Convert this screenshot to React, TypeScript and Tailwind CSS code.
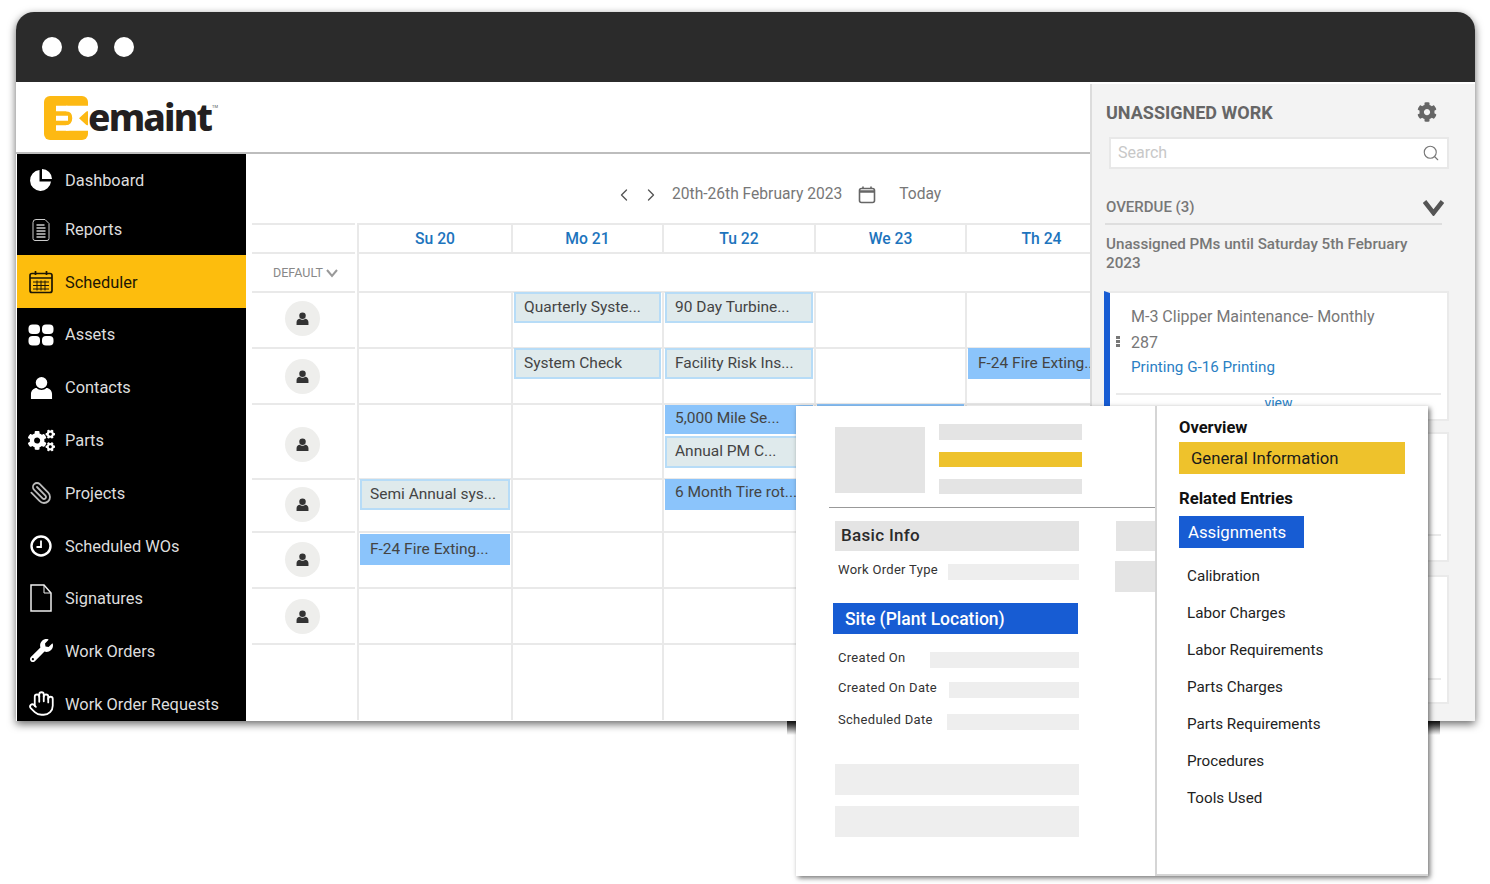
import { FaCog, FaCogs, FaWrench } from "react-icons/fa";
import { ChevronLeft, ChevronRight, Hand, Paperclip, Search } from "lucide-react";

const PieIcon = () => (
  <svg width="24" height="24" viewBox="0 0 24 24" fill="#fff">
    <path d="M10.5 2A10.5 10.5 0 1 0 22 13.5H10.5Z" />
    <path d="M13 1a10 10 0 0 1 10 10H13Z" />
  </svg>
);

const DocLinesIcon = () => (
  <svg width="24" height="24" viewBox="0 0 24 24" fill="none" stroke="#ccc" strokeWidth="1">
    <path d="M7 1.500h9l4 4v15a2 2 0 0 1-2 2H6a2 2 0 0 1-2-2v-16a3 3 0 0 1 3-3Z" />
    <path d="M7.500 7h8M7.500 10h9M7.500 13h9M7.500 16h9M7.500 19h9" strokeWidth="1.500" />
  </svg>
);

const SchedulerIcon = () => (
  <svg width="24" height="24" viewBox="0 0 24 24" fill="none" stroke="#1c1605" strokeWidth="1.700">
    <rect x="1" y="3.500" width="22" height="19" rx="2" />
    <path d="M1 8h22M6.500 1v4M17.500 1v4" />
    <path d="M4 12h16M4 15.500h16M4 19h16M8 10.500v10M12 10.500v10M16 10.500v10" strokeWidth="1" />
  </svg>
);

const AssetsIcon = () => (
  <svg width="26" height="22" viewBox="0 0 26 22" fill="#fff">
    <rect x="0.500" y="0.500" width="11.500" height="9.500" rx="4" />
    <rect x="14" y="0.500" width="11.500" height="9.500" rx="4" />
    <rect x="0.500" y="12" width="11.500" height="9.500" rx="4" />
    <rect x="14" y="12" width="11.500" height="9.500" rx="4" />
  </svg>
);

const PersonIcon = ({ size, color }: { size: number; color: string }) => (
  <svg width={size} height={size} viewBox="0 0 24 24" fill={color}>
    <circle cx="12" cy="7" r="6" />
    <path d="M1 24v-5c0-4 3-6.500 6-6.500 1.500 1.500 3 2 5 2s3.500-.5 5-2c3 0 6 2.500 6 6.500v5Z" />
  </svg>
);

const ClockIcon = () => (
  <svg width="24" height="24" viewBox="0 0 24 24" fill="none" stroke="#fff" strokeWidth="2.400">
    <circle cx="12" cy="12" r="9.500" />
    <path d="M12 6.500V13H7.500" strokeWidth="1.800" />
  </svg>
);

const FileIcon = () => (
  <svg width="24" height="28" viewBox="0 0 24 28" fill="none" stroke="#eee" strokeWidth="1.500">
    <path d="M2 1h13l7 8v18H2Z" />
    <path d="M15 1v8h7" strokeWidth="1" />
  </svg>
);

const CalendarIcon = () => (
  <svg width="18" height="18" viewBox="0 0 18 18" fill="none" stroke="#666" strokeWidth="1.600">
    <rect x="1.500" y="2.500" width="15" height="14" rx="2" />
    <path d="M1.500 5.500h15" strokeWidth="2.400" />
    <path d="M5 .5v2M13 .5v2" />
  </svg>
);

const LogoMark = () => (
  <svg width="44" height="44" viewBox="0 0 44 44">
    <rect width="44" height="44" rx="6" fill="#fdb913" />
    <path d="M29 14H44L35 22.200L44 30.500H29Z" fill="#fff" />
    <g fill="none" stroke="#fff" strokeWidth="5.500">
      <path d="M12 12.500H44M12 32H44" />
      <path d="M22 12.500C28 12.500 31 17 31 22.200C31 27 28 32 22 32" />
      <path d="M12 22.200H24" strokeWidth="5" />
    </g>
  </svg>
);

const nav = [
  { label: "Dashboard", icon: <PieIcon />, h: "h-[51px]", pad: "pt-[4px]" },
  { label: "Reports", icon: <DocLinesIcon />, h: "h-[50px]", pad: "pt-0" },
  { label: "Scheduler", icon: <SchedulerIcon />, h: "h-[53px]", pad: "pt-[4px]", active: true },
  { label: "Assets", icon: <AssetsIcon />, h: "h-[53px]", pad: "pt-[2px]" },
  { label: "Contacts", icon: <PersonIcon size={23} color="#fff" />, h: "h-[53px]", pad: "pt-[2px]" },
  { label: "Parts", icon: <FaCogs size={27} color="#fff" />, h: "h-[52px]", pad: "pt-[2px]" },
  { label: "Projects", icon: <Paperclip size={24} color="#bbb" strokeWidth={1.8} className="-scale-x-100" />, h: "h-[53px]", pad: "pt-[4px]" },
  { label: "Scheduled WOs", icon: <ClockIcon />, h: "h-[53px]", pad: "pt-[4px]" },
  { label: "Signatures", icon: <FileIcon />, h: "h-[52px]", pad: "pt-[2px]" },
  { label: "Work Orders", icon: <FaWrench size={23} color="#fff" />, h: "h-[53px]", pad: "pt-[4px]" },
  { label: "Work Order Requests", icon: <Hand size={27} color="#fff" strokeWidth={1.6} />, h: "h-[53px]", pad: "pt-[4px]" },
];

const Sidebar = () => (
  <aside className="ml-px w-[229px] shrink-0 overflow-hidden bg-black">
    {nav.map((item) => (
      <div
        key={item.label}
        className={`flex items-center ${item.h} ${item.active ? "bg-[#fdbd0d] text-[#1c1605]" : "text-[#dddddd]"}`}
      >
        <span className="flex w-[48px] shrink-0 justify-center">{item.icon}</span>
        <span className={`text-[16.400px] leading-none ${item.pad}`}>{item.label}</span>
      </div>
    ))}
  </aside>
);

type Ev = { text: string; live?: boolean; box?: string };

const Event = ({ text, live, box = "-mt-[1px] h-[31px] leading-[26px]" }: Ev) => (
  <div
    className={`truncate border-2 pl-[8px] text-[15.500px] text-[#444] ${box} ${
      live ? "border-[#8bc4fb] bg-[#8bc4fb]" : "border-[#b7dcf7] bg-[#dfeaec]"
    }`}
  >
    {text}
  </div>
);

const colWidths = ["w-[154px]", "w-[151px]", "w-[152px]", "w-[151px]", "w-[151px]"];

const Row = ({
  h,
  cells,
  avatar = true,
  avatarBox = "",
}: {
  h: string;
  cells: Ev[][];
  avatar?: boolean;
  avatarBox?: string;
}) => (
  <div className={`flex ${h}`}>
    <div className="w-[111px] shrink-0 pl-[6px]">
      <div className={`flex h-full w-[103px] items-center justify-center border-t-2 border-[#e9e9e9] ${avatarBox}`}>
        {avatar && (
          <div className="mr-[3px] flex h-[35px] w-[35px] items-center justify-center rounded-full bg-[#eeeeec]">
            <PersonIcon size={13} color="#333" />
          </div>
        )}
      </div>
    </div>
    {cells.map((evs, i) => (
      <div key={i} className={`${colWidths[i]} shrink-0 border-l-2 border-t-2 border-[#e9e9e9] px-px`}>
        {evs.map((e) => (
          <Event key={e.text} {...e} />
        ))}
      </div>
    ))}
  </div>
);

const Calendar = () => (
  <div className="flex w-[845px] shrink-0 flex-col overflow-hidden bg-white">
    <div className="flex h-[69px] items-center pl-[368px] pt-[13px] text-[15.600px] text-[#777]">
      <ChevronLeft size={20} color="#555" strokeWidth={1.6} />
      <ChevronRight size={20} color="#555" strokeWidth={1.6} className="ml-[7px]" />
      <span className="ml-[11px]">20th-26th February 2023</span>
      <span className="ml-[16px]"><CalendarIcon /></span>
      <span className="ml-[23px]">Today</span>
    </div>
    <div className="flex h-[29px]">
      <div className="w-[111px] shrink-0 pl-[6px]">
        <div className="h-full w-[103px] border-t-2 border-[#e9e9e9]" />
      </div>
      {["Su 20", "Mo 21", "Tu 22", "We 23", "Th 24"].map((d, i) => (
        <div
          key={d}
          className={`${colWidths[i]} shrink-0 border-l-2 border-t-2 border-[#e9e9e9] text-center text-[15.700px] font-medium leading-[27px] text-[#1d74bd]`}
        >
          {d}
        </div>
      ))}
    </div>
    <div className="flex h-[39px]">
      <div className="w-[111px] shrink-0 pl-[6px]">
        <div className="flex h-full w-[103px] items-center justify-center gap-[3px] border-t-2 border-[#e9e9e9] pl-[4px] pt-[1px] text-[12.500px] text-[#888]">
          DEFAULT
          <svg width="12" height="9" viewBox="0 0 12 9" fill="none" stroke="#999" strokeWidth="2">
            <path d="M1 1l5 6 5-6" />
          </svg>
        </div>
      </div>
      <div className="flex-1 border-l-2 border-t-2 border-[#e9e9e9]" />
    </div>
    <Row avatarBox="pb-[3px]" h="h-[56px]" cells={[[], [{ text: "Quarterly Syste..." }], [{ text: "90 Day Turbine..." }], [], []]} />
    <Row
      h="h-[56px]"
      cells={[[], [{ text: "System Check" }], [{ text: "Facility Risk Ins..." }], [], [{ text: "F-24 Fire Exting...", live: true }]]}
    />
    <Row
      avatarBox="pt-[6px]"
      h="h-[75px]"
      cells={[
        [],
        [],
        [
          { text: "5,000 Mile Se...", live: true, box: "h-[29px] leading-[22px]" },
          { text: "Annual PM C...", box: "mt-[2px] h-[32px] leading-[26px]" },
        ],
        [{ text: "", live: true }],
        [],
      ]}
    />
    <Row
      avatarBox="pb-[2px]"
      h="h-[53px]"
      cells={[
        [{ text: "Semi Annual sys..." }],
        [],
        [{ text: "6 Month Tire rot...", live: true, box: "-mt-[1px] h-[31px] leading-[23px]" }],
        [],
        [],
      ]}
    />
    <Row
      avatarBox="pb-[2px]"
      h="h-[56px]"
      cells={[[{ text: "F-24 Fire Exting...", live: true, box: "mt-[1px] h-[31px] leading-[26px]" }], [], [], [], []]}
    />
    <Row avatarBox="pt-[1px]" h="h-[56px]" cells={[[], [], [], [], []]} />
    <Row avatar={false} h="h-[77px]" cells={[[], [], [], [], []]} />
  </div>
);

const CardFoot = ({ h }: { h: string }) => <div className={`mx-[6px] border-t-2 border-[#eaeaea] ${h}`} />;

const UnassignedPanel = () => (
  <section className="mt-[2px] flex w-[385px] shrink-0 flex-col overflow-hidden border-l-2 border-[#dcdcdc] bg-[#f3f3f3]">
    <div className="flex h-[53px] shrink-0 items-center justify-between pl-[14px] pr-[38px] pt-[3px]">
      <span className="text-[18px] font-bold text-[#666]">UNASSIGNED WORK</span>
      <FaCog size={20} color="#666" />
    </div>
    <div className="ml-[17px] mr-[26px] flex h-[32px] shrink-0 items-center justify-between border-2 border-[#e8e8e8] bg-white pl-[7px] pr-[7px] text-[16px] text-[#c8c8c8]">
      Search
      <Search size={18} color="#777" strokeWidth={1.5} />
    </div>
    <div className="ml-[13px] mr-[33px] mt-[27px] flex h-[29px] shrink-0 items-start justify-between border-b-2 border-[#dedede] pl-px">
      <span className="text-[15px] font-medium text-[#777]">OVERDUE (3)</span>
      <svg className="mt-[4px] translate-x-[2px]" width="21" height="16" viewBox="0 0 21 16" fill="none" stroke="#555" strokeWidth="4.500">
        <path d="M1.500 1.500L10.500 13l9-11.500" />
      </svg>
    </div>
    <p className="ml-[14px] mr-[40px] mt-[10px] shrink-0 text-[15.200px] font-medium leading-[18.500px] text-[#777]">
      Unassigned PMs until Saturday 5th February 2023
    </p>
    <div className="ml-[12px] mr-[26px] mt-[19px] flex h-[130px] shrink-0 flex-col border-2 border-l-[6px] border-[#eaeaea] border-l-[#175cd3] bg-white">
      <div className="relative h-[100px] pl-[21px] pt-[11px] text-[16px] leading-[25.500px] text-[#777]">
        <div>M-3 Clipper Maintenance- Monthly</div>
        <div>287</div>
        <div className="text-[15.200px] text-[#2a7fc4]">Printing G-16 Printing</div>
        <span className="absolute left-[6px] top-[43px] flex flex-col gap-[1px]">
          <i className="block h-[3px] w-[4px] bg-[#777]" />
          <i className="block h-[3px] w-[4px] bg-[#777]" />
          <i className="block h-[3px] w-[4px] bg-[#777]" />
        </span>
      </div>
      <div className="mx-[6px] flex-1 border-t-2 border-[#eaeaea] text-center text-[14px] leading-[16px] text-[#2a7fc4]">view</div>
    </div>
    <div className="ml-[14px] mr-[26px] mt-[11px] flex h-[130px] shrink-0 flex-col justify-end border-2 border-[#eaeaea] bg-white">
      <CardFoot h="h-[26px]" />
    </div>
    <div className="ml-[14px] mr-[26px] mt-[13px] flex h-[129px] shrink-0 flex-col justify-end border-2 border-[#eaeaea] bg-white">
      <CardFoot h="h-[24px]" />
    </div>
  </section>
);

const Field = ({ label, box, top }: { label: string; box: string; top: string }) => (
  <div className={`flex h-[16px] items-start ${top}`}>
    <span className="-mt-[2px] ml-[3px] text-[13px] leading-[15px] tracking-[0.3px] text-[#333]">{label}</span>
    <div className={`ml-auto h-[16px] bg-[#eeeeee] ${box}`} />
  </div>
);

const entries = ["Calibration", "Labor Charges", "Labor Requirements", "Parts Charges", "Parts Requirements", "Procedures", "Tools Used"];

const DetailPopup = () => (
  <div className="absolute left-[796px] top-[406px] z-10 flex h-[470px] w-[632px] bg-white shadow-[2px_2px_5px_rgba(0,0,0,0.55)]">
    <div className="w-[359px] shrink-0 overflow-hidden">
      <div className="ml-[33px] flex h-[101px] pl-[6px] pt-[18px]">
        <div className="mt-[3px] h-[66px] w-[90px] bg-[#e4e4e4]" />
        <div className="ml-[14px] w-[143px]">
          <div className="h-[16px] bg-[#e4e4e4]" />
          <div className="mt-[12px] h-[15px] bg-[#eec22c]" />
          <div className="mt-[12px] h-[15px] bg-[#e4e4e4]" />
        </div>
      </div>
      <div className="ml-[33px] h-px bg-[#999]" />
      <div className="flex pl-[39px] pt-[13px]">
        <div className="w-[244px] shrink-0">
          <div className="flex h-[30px] items-center bg-[#e4e4e4] pl-[6px] text-[17px] font-medium tracking-[0.3px] text-[#2b2b2b]">Basic Info</div>
          <Field label="Work Order Type" box="w-[131px]" top="mt-[13px]" />
          <div className="-ml-[2px] mt-[23px] flex h-[31px] w-[245px] items-center bg-[#175cd3] pl-[12px] pt-[2px] text-[17.500px] font-medium text-white">
            Site (Plant Location)
          </div>
          <Field label="Created On" box="w-[149px]" top="mt-[18px]" />
          <Field label="Created On Date" box="w-[130px]" top="mt-[14px]" />
          <Field label="Scheduled Date" box="w-[132px]" top="mt-[16px]" />
          <div className="mt-[34px] h-[31px] bg-[#eeeeee]" />
          <div className="mt-[11px] h-[31px] bg-[#eeeeee]" />
        </div>
        <div className="ml-[37px] w-[40px] shrink-0">
          <div className="h-[30px] bg-[#e4e4e4]" />
          <div className="-ml-px mt-[10px] h-[31px] w-[41px] bg-[#e4e4e4]" />
        </div>
      </div>
    </div>
    <div className="flex-1 border-b-2 border-l-2 border-[#d5d5d5] pl-[22px] pt-[12px]">
      <h3 className="text-[16.500px] font-bold leading-[19px] text-[#111]">Overview</h3>
      <div className="mt-[5px] flex h-[32px] w-[226px] items-center bg-[#eec22c] pl-[12px] pt-[1px] text-[16.700px] text-[#1a1a1a]">General Information</div>
      <h3 className="mt-[15px] text-[16.700px] font-bold leading-[19px] text-[#111]">Related Entries</h3>
      <div className="mt-[8px] flex h-[32px] w-[125px] items-center bg-[#175cd3] pl-[9px] pt-[1px] text-[16.800px] text-white">Assignments</div>
      <ul className="mt-[10px] pl-[8px] text-[15.200px] leading-[37px] text-[#222]">
        {entries.map((e) => (
          <li key={e}>{e}</li>
        ))}
      </ul>
    </div>
  </div>
);

export default function App() {
  return (
    <div className="relative h-[884px] w-[1490px] overflow-hidden bg-white pl-[16px] pt-[12px] font-['Roboto',sans-serif]">
      <div className="flex h-[709px] w-[1459px] flex-col overflow-hidden rounded-t-[18px] bg-white shadow-[0_3px_9px_rgba(0,0,0,0.6)]">
        <div className="flex h-[70px] shrink-0 items-center gap-[16px] bg-[#2b2b2b] pl-[26px]">
          <span className="h-[20px] w-[20px] rounded-full bg-white" />
          <span className="h-[20px] w-[20px] rounded-full bg-white" />
          <span className="h-[20px] w-[20px] rounded-full bg-white" />
        </div>
        <div className="flex min-h-0 flex-1">
          <div className="flex w-[1074px] shrink-0 flex-col">
            <header className="flex h-[72px] shrink-0 items-center border-b-2 border-[#bdbdbd] pl-[28px] pt-[2px]">
              <LogoMark />
              <span className="mb-[3px] font-['Noto_Sans',sans-serif] text-[37px] font-extrabold leading-none tracking-[-1.800px] text-[#231f20]">emaint</span>
              <span className="mb-[22px] ml-[1px] text-[4px] text-[#555]">TM</span>
            </header>
            <div className="flex min-h-0 flex-1">
              <Sidebar />
              <Calendar />
            </div>
          </div>
          <UnassignedPanel />
        </div>
      </div>
      <div className="absolute left-[787px] top-[721px] h-[14px] w-[653px] bg-gradient-to-b from-[#111] to-transparent" />
      <DetailPopup />
    </div>
  );
}
